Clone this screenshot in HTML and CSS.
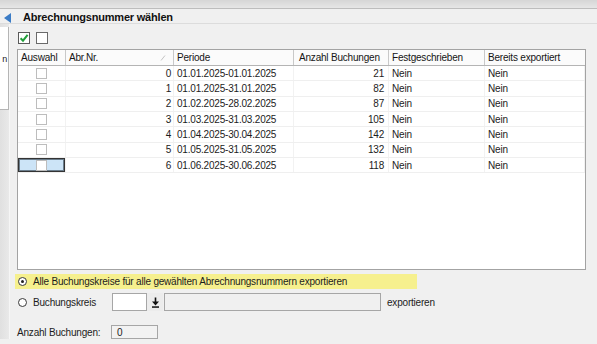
FILE: index.html
```html
<!DOCTYPE html>
<html>
<head>
<meta charset="UTF-8">
<title>Abrechnungsnummer wählen</title>
<link rel="stylesheet" href="styles.css">
</head>
<body>

<div class="topbar"></div>
<div class="titlebar">
	<span class="tri"></span>
	<span class="title">Abrechnungsnummer wählen</span>
</div>

<div class="layout">
	<div class="side">
		<div class="sidebox"><span class="sidetxt">n</span></div>
	</div>

	<div class="main">
		<div class="checks">
			<svg class="cb" width="12" height="12" viewBox="0 0 12 12">
				<rect x="0.5" y="0.5" width="11" height="11" fill="#fff" stroke="#5a5a5a"/>
				<path d="M2.6 6.2 L5 8.7 L9.6 2.9" fill="none" stroke="#22a03a" stroke-width="2"/>
			</svg>
			<svg class="cb" width="12" height="12" viewBox="0 0 12 12">
				<rect x="0.5" y="0.5" width="11" height="11" fill="#fff" stroke="#6a6a6a"/>
			</svg>
		</div>

		<div class="grid">
			<div class="row head">
				<div class="c">Auswahl</div>
				<div class="c sort">Abr.Nr.
					<svg width="6" height="6" viewBox="0 0 6 6"><path d="M1 5.5 L5 0.5" stroke="#c4c4c4" stroke-width="1"/></svg>
				</div>
				<div class="c">Periode</div>
				<div class="c pl5">Anzahl Buchungen</div>
				<div class="c">Festgeschrieben</div>
				<div class="c">Bereits exportiert</div>
			</div>
			<div id="rows"></div>
		</div>

		<div class="opt opt-all">
			<span class="radio on"></span>
			<span>Alle Buchungskreise für alle gewählten Abrechnungsnummern exportieren</span>
		</div>

		<div class="opt opt-bk">
			<span class="radio"></span>
			<span class="lbl">Buchungskreis</span>
			<span class="inp inp-bk"></span>
			<span class="dd">
				<svg width="9" height="11" viewBox="0 0 9 11">
					<path d="M4.5 0.5 V5" stroke="#111" stroke-width="1.6"/>
					<path d="M1 4.6 H8 L4.5 8.4 Z" fill="#111"/>
					<rect x="1" y="9.3" width="7" height="1.5" fill="#111"/>
				</svg>
			</span>
			<span class="inp inp-name"></span>
			<span class="exp">exportieren</span>
		</div>

		<div class="opt opt-cnt">
			<span class="lbl2">Anzahl Buchungen:</span>
			<span class="inp inp-cnt">0</span>
		</div>
	</div>
</div>

<script type="text/javascript">
	// Abrechnungsnummern
	var data = [
		[0, "01.01.2025-01.01.2025", 21],
		[1, "01.01.2025-31.01.2025", 82],
		[2, "01.02.2025-28.02.2025", 87],
		[3, "01.03.2025-31.03.2025", 105],
		[4, "01.04.2025-30.04.2025", 142],
		[5, "01.05.2025-31.05.2025", 132],
		[6, "01.06.2025-30.06.2025", 118]
	];

	var box = document.getElementById("rows");
	for (var i = 0; i < data.length; i++)
	{
		var r = document.createElement("div");
		r.className = "row";
		var sel = (i == data.length - 1) ? " selected" : "";
		r.innerHTML =
			'<div class="c ctr' + sel + '"><span class="rcb"></span></div>' +
			'<div class="c num">' + data[i][0] + '</div>' +
			'<div class="c">' + data[i][1] + '</div>' +
			'<div class="c num2">' + data[i][2] + '</div>' +
			'<div class="c">Nein</div>' +
			'<div class="c">Nein</div>';
		box.appendChild(r);
	}
</script>

</body>
</html>
```

FILE: styles.css
```css
body
{
	margin: 0;
	background-color: #f0f0f0;
	font-family: "Liberation Sans", Arial, sans-serif;
	font-size: 10px;
	letter-spacing: -0.2px;
	color: #1c1c1c;
}

.topbar
{
	height: 8px;
	background: linear-gradient(#d6d6d6, #e6e6e6);
	border-bottom: 1px solid #bdbdbd;
}

.titlebar
{
	height: 14px;
	display: flex;
	align-items: center;
	border-bottom: 1px solid #dcdcdc;
}
.tri
{
	width: 0;
	height: 0;
	margin-left: 4px;
	margin-top: 3px;
	border-top: 5px solid transparent;
	border-bottom: 5px solid transparent;
	border-right: 7px solid #3b7cc6;
}
.title
{
	margin-left: 12px;
	margin-top: 2px;
	font-size: 11px;
	font-weight: bold;
	color: #111;
}

.layout
{
	display: flex;
}
.side
{
	width: 9px;
	background: linear-gradient(to right, #e0e0e0, #e9e9e9);
	border-right: 1px solid #f6f6f6;
}
.sidebox
{
	margin-top: 3px;
	height: 82px;
	background-color: #fff;
	border-right: 1px solid #b5b5b5;
	border-bottom: 1px solid #b5b5b5;
	overflow: hidden;
	text-align: right;
}
.sidetxt
{
	display: block;
	margin-top: 27px;
	margin-right: 1px;
	font-size: 9px;
}

.main
{
	padding-left: 7px;
	padding-top: 8px;
	width: 569px;
}

.checks
{
	display: flex;
	gap: 6px;
	height: 12px;
	margin-left: 1px;
}
.cb { display: block; }

/* grid */
.grid
{
	margin-top: 5px;
	height: 219px;
	background-color: #fff;
	border: 1px solid #a3a3a3;
}
.row
{
	display: grid;
	grid-template-columns: 48px 108px 120px 95px 96px 100px;
	height: 15.33px;
	box-sizing: border-box;
	border-bottom: 1px solid #efefef;
}
.row.head
{
	height: 16px;
	background-color: #fbfbfb;
	border-bottom: 1px solid #b4b4b4;
}
.c
{
	box-sizing: border-box;
	padding-left: 3px;
	display: flex;
	align-items: center;
	border-right: 1px solid #f2f2f2;
	white-space: nowrap;
	overflow: hidden;
}
.head .c
{
	border-right: 1px solid #c9c9c9;
	color: #151515;
}
.head .c:last-child { border-right: 0; }
.sort
{
	justify-content: space-between;
	padding-right: 7px;
}
.pl5 { padding-left: 5px; }

.ctr
{
	justify-content: center;
	padding-left: 0;
}
.num
{
	justify-content: flex-end;
	padding-right: 2px;
}
.num2
{
	justify-content: flex-end;
	padding-right: 4px;
}
.rcb
{
	width: 9px;
	height: 9px;
	border: 1px solid #bdbdbd;
	background-color: #fff;
}
.selected
{
	background-color: #cce4f7;
	box-shadow: inset 0 0 0 1px #333, inset 0 0 0 2px #6a7d8c;
}

/* options */
.opt
{
	display: flex;
	align-items: center;
}
.opt-all
{
	margin-top: 4px;
	height: 15px;
	width: 399px;
	margin-left: -2px;
	padding-left: 3px;
	background-color: #f6f08e;
}
.opt-bk
{
	margin-top: 4px;
	height: 18px;
	padding-left: 1px;
}
.opt-cnt
{
	margin-top: 14px;
	height: 14px;
}
.radio
{
	box-sizing: border-box;
	width: 9px;
	height: 9px;
	margin-right: 6px;
	border: 1px solid #3a3a3a;
	border-radius: 50%;
	background-color: #fff;
	display: flex;
	align-items: center;
	justify-content: center;
}
.radio.on::after
{
	content: "";
	width: 3px;
	height: 3px;
	border-radius: 50%;
	background-color: #222;
}
.lbl
{
	width: 79px;
}
.inp
{
	box-sizing: border-box;
	height: 18px;
	border: 1px solid #a6a6a6;
	background-color: #fff;
}
.inp-bk { width: 35px; }
.dd
{
	width: 16px;
	height: 18px;
	display: flex;
	align-items: center;
	justify-content: center;
	background-color: #ececec;
}
.inp-name
{
	width: 217px;
	margin-left: 1px;
	background-color: #f0f0f0;
}
.exp
{
	margin-left: 6px;
}
.lbl2
{
	width: 94px;
}
.inp-cnt
{
	width: 47px;
	height: 14px;
	padding-left: 5px;
	background-color: #f2f2f2;
	display: flex;
	align-items: center;
}
```
